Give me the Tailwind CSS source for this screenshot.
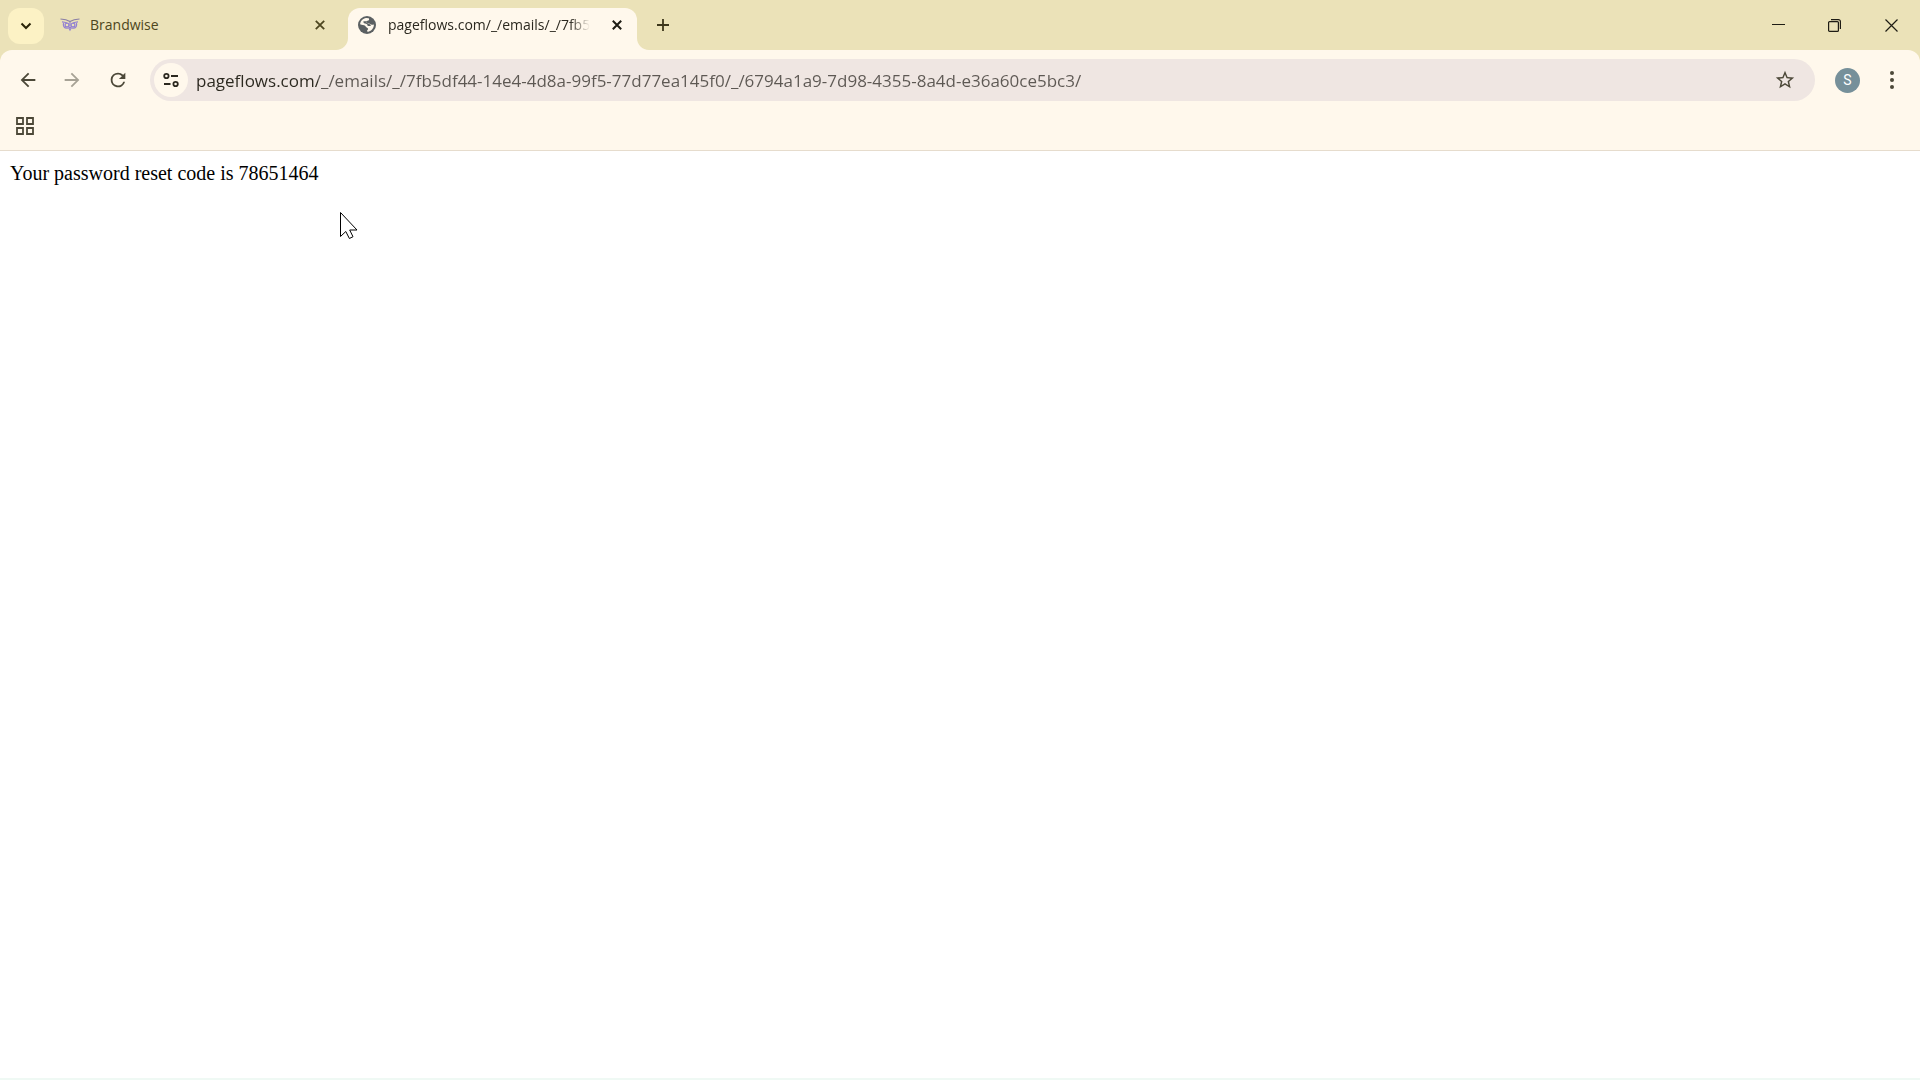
<!DOCTYPE html>
<html lang="en">
<head>
  <meta charset="UTF-8">
  <meta name="viewport" content="width=device-width, initial-scale=1">
  <title>pageflows.com</title>
  <script src="https://cdn.jsdelivr.net/npm/@tailwindcss/browser@4"></script>
</head>
<body class="min-h-screen flex flex-col bg-white font-['Open_Sans','Noto_Sans',sans-serif]">

  <header class="bg-[#ebe2b8]">
    <!-- Tab strip -->
    <div class="flex h-[50px] pl-2">
      <button aria-label="Search tabs" class="mt-2 w-9 h-9 rounded-xl bg-[#fcf2c5] flex items-center justify-center text-[#2a2408]">
        <svg class="w-3 h-3" viewBox="0 0 12 12" fill="none" stroke="currentColor" stroke-width="2"><path d="M1.500 3.500 6 8l4.500-4.500" /></svg>
      </button>

      <div class="w-[292px] pl-4 pr-1.5 flex items-center">
        <a href="#" class="flex-1 flex items-center gap-2.5 text-sm text-[#4d4620]">
          <svg class="w-5 h-5" viewBox="0 0 20 20" fill="none" stroke="#9380d2" stroke-width="1.200">
            <path stroke="#8a7fa6" d="M.5 4c3 .2 6.500.8 9.500 2.600C13 4.800 16.500 4.200 19.500 4" />
            <path d="M2 6.800c2 .1 3.500.5 5 1.200M18 6.800c-2 .1-3.500.5-5 1.200" />
            <path d="M3.600 8c-.8 2.600.4 5.200 3.400 5.200 1.200 0 2.200-.5 3-1.400.8.900 1.800 1.400 3 1.400 3 0 4.200-2.600 3.400-5.200" />
            <circle cx="7" cy="10" r="1.900" /><circle cx="13" cy="10" r="1.900" />
            <path d="M9 13.200 10 15l1-1.800M10 7v4" />
          </svg>
          Brandwise
        </a>
        <button aria-label="Close tab" class="w-5 h-5 flex items-center justify-center text-[#4d4620]">
          <svg class="w-2.5 h-2.5" viewBox="0 0 10 10" fill="none" stroke="currentColor" stroke-width="1.800"><path d="m.8.8 8.400 8.400M9.200.8.8 9.200" /></svg>
        </button>
      </div>

      <!-- Active tab with its flared feet -->
      <svg class="w-3 h-3 self-end text-[#fff8ec]" viewBox="0 0 12 12" fill="currentColor"><path d="M12 0v12H0C6.600 12 12 6.600 12 0z" /></svg>
      <div class="w-[289px] mt-2 pl-2.5 pr-2.5 pb-2 rounded-t-xl bg-[#fff8ec] flex items-center">
        <svg class="w-[18px] h-[18px] shrink-0" viewBox="0 0 18 18">
          <circle cx="9" cy="9" r="9" fill="#5b6062" />
          <path fill="#fff8ec" d="M10.800 2.200c.8 1.300 0 2.300-1.200 2.600-1.500.3-1.600 1-.9 1.600.9.800 2.500.6 3.300 1.500.7.800 1.600 1 3.900.6.100 3.500-2.200 6.400-5.600 7.200-1.300.2-1.600-.8-.8-1.700.7-.8 1-1.700-.1-2.100-1.100-.3-1.500-1.200-2.300-2.100C6 8.700 4 8.900 2.100 8.200 2.500 5 5 2.400 8.100 2.100z" />
          <path fill="#5b6062" d="M5.500 5.200c-.4 1 .3 2 1.500 2.300 1.600.4 2.900 1 2.600 2.600h3.200c.1-1.500-1-2.300-2.600-2.700C8.400 7 8.100 6.200 8.700 5.200z" />
        </svg>
        <a href="#" class="ml-3 whitespace-nowrap text-sm text-[#2b281f] mask-r-from-90% mask-r-to-100%">pageflows.com/_/emails/_/7fb5</a>
        <button aria-label="Close tab" class="ml-auto w-5 h-5 flex items-center justify-center text-[#1e1c14]">
          <svg class="w-2.5 h-2.5" viewBox="0 0 10 10" fill="none" stroke="currentColor" stroke-width="2"><path d="m.8.8 8.400 8.400M9.200.8.8 9.200" /></svg>
        </button>
      </div>
      <svg class="w-3 h-3 self-end text-[#fff8ec]" viewBox="0 0 12 12" fill="currentColor"><path d="M0 0v12h12C5.400 12 0 6.600 0 0z" /></svg>

      <button aria-label="New tab" class="w-7 flex items-center justify-center text-[#3d371b]">
        <svg class="w-3 h-3" viewBox="0 0 12 12" fill="none" stroke="currentColor" stroke-width="1.800"><path d="M6 0v12M0 6h12" /></svg>
      </button>

      <!-- Window controls -->
      <div class="ml-auto flex text-[#1e1c14]">
        <button aria-label="Minimize" class="w-14 flex items-center justify-center">
          <svg class="w-[13px] h-[13px]" viewBox="0 0 13 13" stroke="currentColor"><path d="M0 5.500h13" /></svg>
        </button>
        <button aria-label="Restore" class="w-14 flex items-center justify-center">
          <svg class="w-[13px] h-[13px]" viewBox="0 0 13 13" fill="none" stroke="currentColor" stroke-width="1.200"><rect x=".6" y="2.600" width="9.800" height="9.800" rx="1" /><path d="M3 .6h7.400a2 2 0 0 1 2 2V10" /></svg>
        </button>
        <button aria-label="Close" class="w-[58px] flex items-center justify-center">
          <svg class="w-[13px] h-[13px]" viewBox="0 0 13 13" fill="none" stroke="currentColor" stroke-width="1.200"><path d="m.5.5 12 12M12.500.5l-12 12" /></svg>
        </button>
      </div>
    </div>

    <div class="rounded-t-xl bg-[#fff8ec] border-b border-[#e6dccd]">
      <!-- Toolbar -->
      <div class="flex items-center pt-2 pl-1.5 pr-1.5 text-[#4c4838]">
        <button aria-label="Back" class="w-11 h-11 flex items-center justify-center">
          <svg class="w-[22px] h-[22px]" viewBox="0 0 24 24" fill="currentColor"><path d="M20 11H7.830l5.590-5.590L12 4l-8 8 8 8 1.410-1.410L7.830 13H20v-2z" /></svg>
        </button>
        <button aria-label="Forward" class="w-11 h-11 flex items-center justify-center text-[#a7a295]">
          <svg class="w-[22px] h-[22px]" viewBox="0 0 24 24" fill="currentColor"><path d="m12 4-1.410 1.410L16.170 11H4v2h12.170l-5.580 5.590L12 20l8-8z" /></svg>
        </button>
        <button aria-label="Reload" class="w-12 h-11 flex items-center justify-center">
          <svg class="w-[22px] h-[22px]" viewBox="0 0 24 24" fill="currentColor"><path d="M17.650 6.350A7.958 7.958 0 0 0 12 4a8 8 0 1 0 7.730 10h-2.080A6 6 0 1 1 12 6c1.660 0 3.140.69 4.220 1.780L13 11h7V4l-2.350 2.350z" /></svg>
        </button>

        <div class="ml-2 flex-1 h-[42px] pl-1 pr-[18px] rounded-full bg-[#efe6e2] flex items-center">
          <button aria-label="View site information" class="w-[34px] h-[34px] rounded-full bg-[#fff8ec] flex items-center justify-center text-[#2b281f]">
            <svg class="w-4 h-4" viewBox="0 0 16 16" fill="none" stroke="currentColor" stroke-width="1.800"><circle cx="3.400" cy="4" r="2.200" /><path d="M8 4h7M1 12h6.500" /><circle cx="12.600" cy="12" r="2.200" /></svg>
          </button>
          <input type="text" aria-label="Address bar" value="pageflows.com/_/emails/_/7fb5df44-14e4-4d8a-99f5-77d77ea145f0/_/6794a1a9-7d98-4355-8a4d-e36a60ce5bc3/" class="ml-2 flex-1 h-8 text-[17px] text-transparent bg-clip-text bg-linear-to-r from-[#2b281f] from-[122px] to-[#5d5853] to-[122px] outline-none">
          <button aria-label="Bookmark this page" class="w-6 h-6 flex items-center justify-center">
            <svg class="w-[22px] h-[22px]" viewBox="0 0 24 24" fill="currentColor"><path d="m22 9.240-7.190-.62L12 2 9.190 8.630 2 9.240l5.460 4.730L5.820 21 12 17.270 18.180 21l-1.630-7.030L22 9.240zM12 15.400l-3.760 2.270 1-4.280-3.320-2.880 4.380-.38L12 6.100l1.710 4.040 4.380.38-3.320 2.880 1 4.280L12 15.400z" /></svg>
          </button>
        </div>

        <button aria-label="Profile" class="ml-5 w-[25px] h-[25px] rounded-full bg-[#76909a] text-white text-sm font-['Roboto',sans-serif] flex items-center justify-center">S</button>
        <button aria-label="Menu" class="ml-[10px] w-11 h-11 flex items-center justify-center">
          <svg class="w-5 h-5" viewBox="0 0 20 20" fill="currentColor"><circle cx="10" cy="3" r="2" /><circle cx="10" cy="10" r="2" /><circle cx="10" cy="17" r="2" /></svg>
        </button>
      </div>

      <!-- Bookmarks bar -->
      <div class="h-12 pl-3.5 flex items-center text-[#4c4838]">
        <button aria-label="Apps" class="w-[22px] h-[22px] flex items-center justify-center">
          <svg class="w-[18px] h-[18px]" viewBox="0 0 18 18" fill="none" stroke="currentColor" stroke-width="1.800"><path d="M1 1h6v6H1zM11 1h6v6h-6zM1 11h6v6H1zM11 11h6v6h-6z" /></svg>
        </button>
      </div>
    </div>
  </header>

  <main class="flex-1 p-2.5 border-b-2 border-[#eff9f4] text-xl leading-6 text-black font-['Liberation_Serif',serif]">
    Your password reset code is 78651464
  </main>

  <!-- Mouse pointer -->
  <svg class="absolute left-[339px] top-[211px] w-5 h-7" viewBox="0 0 20 28" fill="#fff" stroke="#000"><path d="M1.500 1.500v24l5.300-5 3.600 7 3.600-1.800-3.300-6.700h7.300z" /></svg>

</body>
</html>
